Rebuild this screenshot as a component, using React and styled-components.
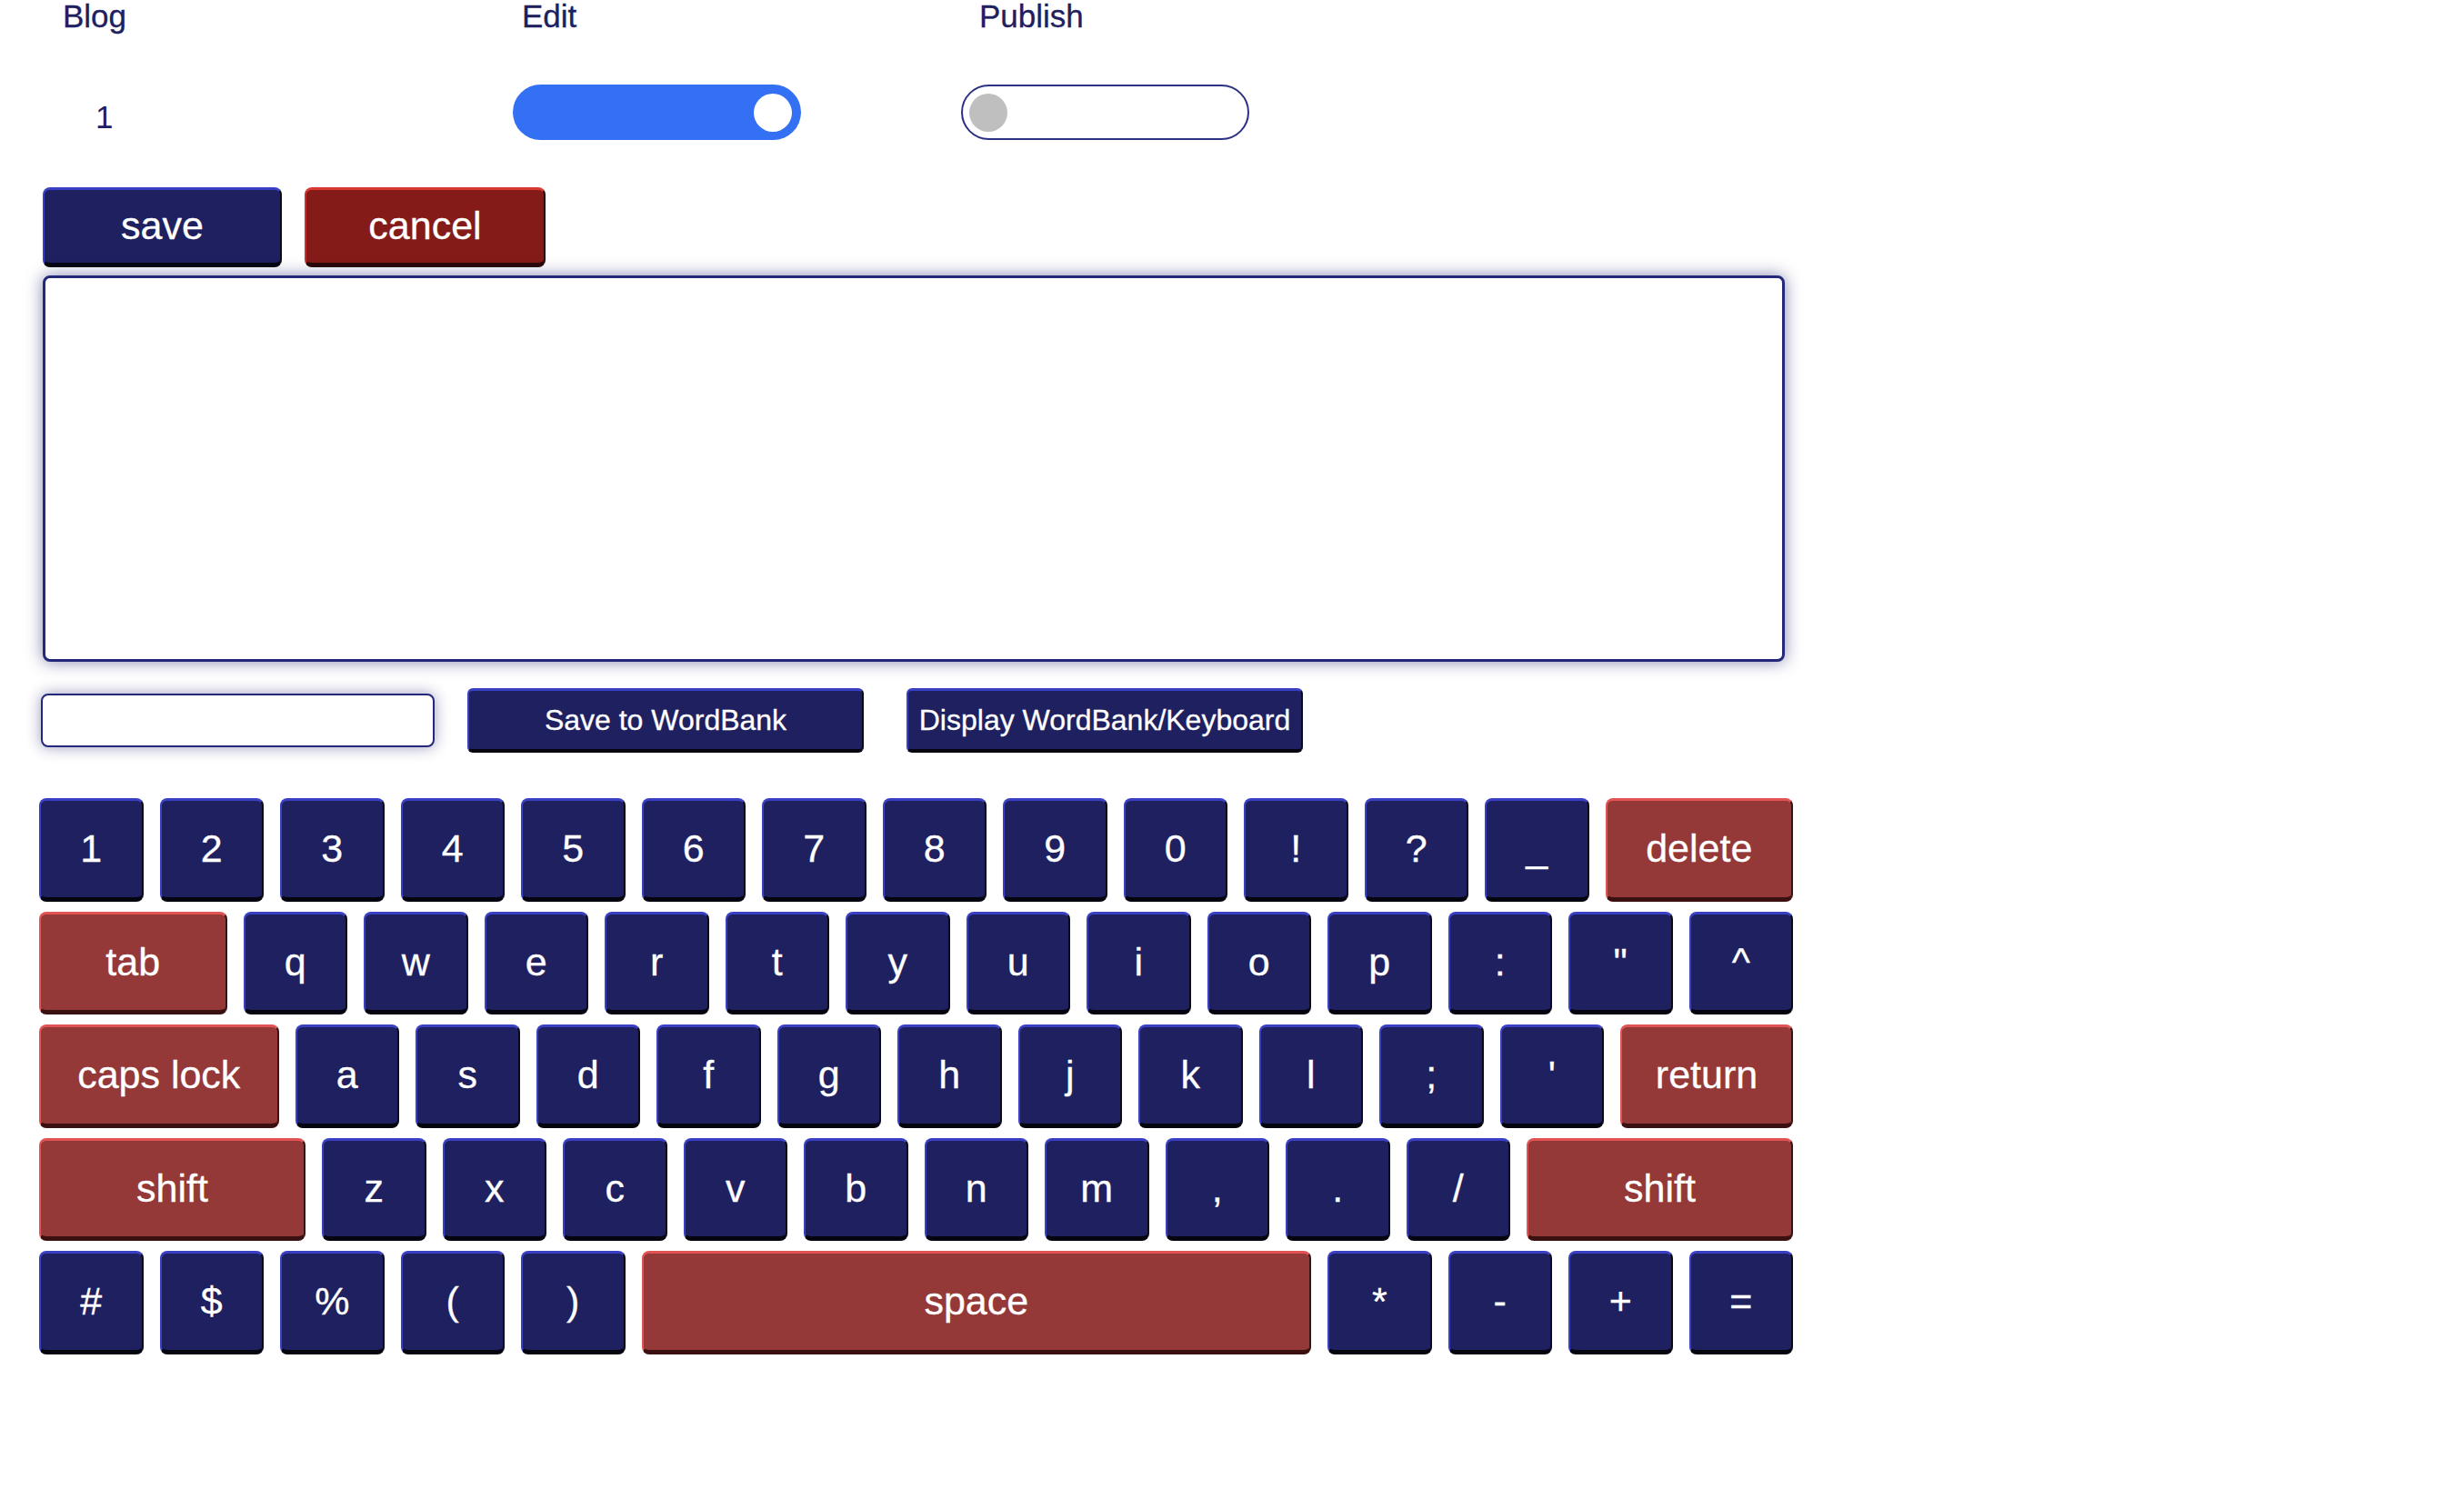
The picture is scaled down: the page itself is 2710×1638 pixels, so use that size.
import React from "react";
import styled, { createGlobalStyle, css } from "styled-components";

const GlobalStyle = createGlobalStyle`
  *, *::before, *::after { box-sizing: border-box; }
  html, body { margin: 0; padding: 0; background: #ffffff; }
  body { font-family: "Liberation Sans", Arial, Helvetica, sans-serif; }
`;

const NAVY = "#1e2060";
const NAVY_LIGHT = "#3a40c4";
const RED = "#943838";
const RED_LIGHT = "#e25454";

const Page = styled.div`
  display: flex;
  flex-direction: column;
  align-items: flex-start;
  padding-bottom: 120px;
`;

const HeaderRow = styled.div`
  display: grid;
  grid-template-columns: 505px 503px auto;
  padding-left: 69px;
`;

const HeaderLabel = styled.div`
  font-size: 35px;
  line-height: 1;
  color: ${NAVY};
  -webkit-text-stroke: 0.3px ${NAVY};
`;

const ValueRow = styled.div`
  display: grid;
  grid-template-columns: 459px 493px auto;
  align-items: center;
  padding-left: 105px;
  margin-top: 58px;
  height: 61px;
`;

const RowNumber = styled.div`
  font-size: 35px;
  line-height: 1;
  color: ${NAVY};
  padding-top: 10px;
`;

const Toggle = styled.div`
  width: 317px;
  height: 61px;
  border-radius: 31px;
  display: flex;
  align-items: center;
  ${(p) =>
    p.$on
      ? css`
          background: #3370f3;
          justify-content: flex-end;
          padding: 0 10px;
        `
      : css`
          background: #ffffff;
          border: 2px solid #2b3183;
          justify-content: flex-start;
          padding: 0 7px;
        `}
`;

const Knob = styled.div`
  width: 42px;
  height: 42px;
  border-radius: 50%;
  background: ${(p) => (p.$on ? "#ffffff" : "#bfbfbf")};
`;

const ActionRow = styled.div`
  display: flex;
  gap: 25px;
  margin-top: 52px;
  padding-left: 47px;
`;

const bevel = (p) =>
  p.$variant === "red"
    ? css`
        background: ${RED};
        border-color: ${RED_LIGHT} #3a1414 #3a1010 ${RED_LIGHT};
      `
    : p.$variant === "darkred"
    ? css`
        background: #851b18;
        border-color: #d83a32 #2a0a0a #2a0808 #c83030;
      `
    : css`
        background: ${NAVY};
        border-color: ${NAVY_LIGHT} #0a0a18 #050510 ${NAVY_LIGHT};
      `;

const ActionButton = styled.button`
  width: ${(p) => p.$w}px;
  height: 88px;
  border-style: solid;
  border-width: 3px 2px 5px 2px;
  border-radius: 8px;
  color: #ffffff;
  font-family: inherit;
  font-size: 43px;
  padding: 0 0 2px 0;
  display: flex;
  align-items: center;
  justify-content: center;
  -webkit-text-stroke: 0.3px #ffffff;
  ${bevel}
`;

const Editor = styled.textarea`
  width: 1916px;
  height: 425px;
  margin: 9px 0 0 47px;
  border: 3px solid #23287a;
  border-radius: 8px;
  box-shadow: 0 0 18px rgba(30, 32, 110, 0.55);
  resize: none;
  outline: none;
  background: #ffffff;
  font-family: inherit;
`;

const WordRow = styled.div`
  display: flex;
  align-items: center;
  margin-top: 29px;
  padding-left: 45px;
`;

const WordInput = styled.input`
  width: 433px;
  height: 59px;
  border: 2px solid #23287a;
  border-radius: 8px;
  box-shadow: 0 0 16px rgba(30, 32, 110, 0.45);
  outline: none;
  background: #ffffff;
`;

const WordButton = styled.button`
  width: 436px;
  height: 71px;
  margin-left: ${(p) => p.$gap}px;
  border-style: solid;
  border-width: 3px 2px 4px 2px;
  border-radius: 6px;
  color: #ffffff;
  font-family: inherit;
  font-size: 32px;
  padding: 0;
  white-space: nowrap;
  -webkit-text-stroke: 0.3px #ffffff;
  ${bevel}
`;

const Keyboard = styled.div`
  display: flex;
  flex-direction: column;
  gap: 11px;
  margin-top: 50px;
  padding-left: 43px;
`;

const KeyRow = styled.div`
  display: flex;
  gap: 18px;
`;

const Key = styled.button`
  width: ${(p) => p.$w || 114.5}px;
  height: 113.5px;
  flex: none;
  border-style: solid;
  border-width: 3px 2px 5px 2px;
  border-radius: 8px;
  color: #ffffff;
  font-family: inherit;
  font-size: 43px;
  padding: 0;
  display: flex;
  align-items: center;
  justify-content: center;
  -webkit-text-stroke: 0.3px #ffffff;
  ${bevel}
`;

const rows = [
  [..."1234567890!?_".split(""), { l: "delete", w: 206.5 }],
  [{ l: "tab", w: 206.5 }, ..."qwertyuiop:\"^".split("")],
  [{ l: "caps lock", w: 263.5 }, ..."asdfghjkl;'".split(""), { l: "return", w: 190 }],
  [{ l: "shift", w: 293 }, ..."zxcvbnm,./".split(""), { l: "shift", w: 293 }],
  [..."#$%()".split(""), { l: "space", w: 736.5 }, ..."*-+=".split("")],
];

export default function App() {
  return (
    <>
      <GlobalStyle />
      <Page>
        <HeaderRow>
          <HeaderLabel>Blog</HeaderLabel>
          <HeaderLabel>Edit</HeaderLabel>
          <HeaderLabel>Publish</HeaderLabel>
        </HeaderRow>
        <ValueRow>
          <RowNumber>1</RowNumber>
          <Toggle $on>
            <Knob $on />
          </Toggle>
          <Toggle>
            <Knob />
          </Toggle>
        </ValueRow>
        <ActionRow>
          <ActionButton $w={263}>save</ActionButton>
          <ActionButton $w={265} $variant="darkred">
            cancel
          </ActionButton>
        </ActionRow>
        <Editor />
        <WordRow>
          <WordInput type="text" />
          <WordButton $gap={36}>Save to WordBank</WordButton>
          <WordButton $gap={47}>Display WordBank/Keyboard</WordButton>
        </WordRow>
        <Keyboard>
          {rows.map((row, ri) => (
            <KeyRow key={ri}>
              {row.map((k, ki) =>
                typeof k === "string" ? (
                  <Key key={ki}>{k}</Key>
                ) : (
                  <Key key={ki} $w={k.w} $variant="red">
                    {k.l}
                  </Key>
                )
              )}
            </KeyRow>
          ))}
        </Keyboard>
      </Page>
    </>
  );
}
